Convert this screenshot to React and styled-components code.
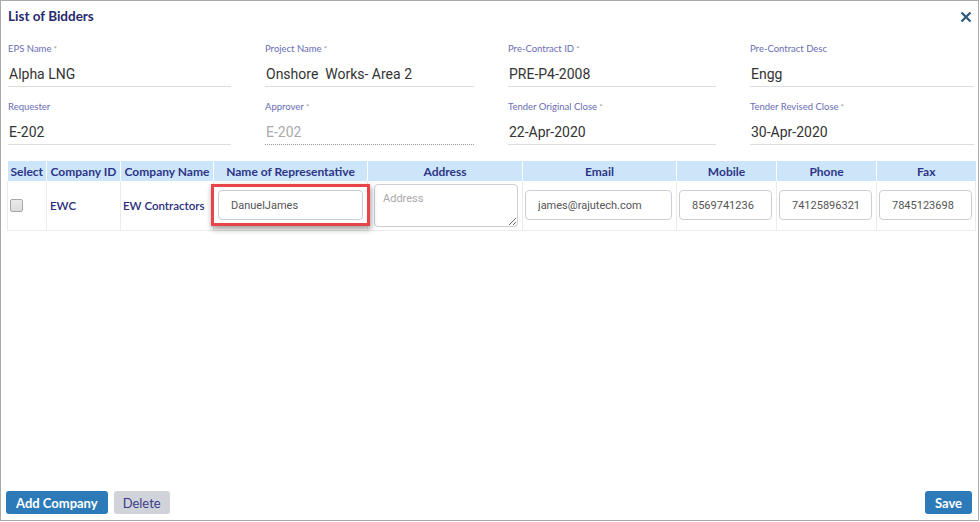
import React from 'react';
import styled, { createGlobalStyle } from 'styled-components';

const GlobalStyle = createGlobalStyle`
  html, body { margin: 0; padding: 0; background: #fff; }
  * { box-sizing: border-box; }
`

const fields = [
  { label: 'EPS Name', req: true, value: 'Alpha LNG' },
  { label: 'Project Name', req: true, value: 'Onshore  Works- Area 2' },
  { label: 'Pre-Contract ID', req: true, value: 'PRE-P4-2008' },
  { label: 'Pre-Contract Desc', value: 'Engg' },
  { label: 'Requester', value: 'E-202' },
  { label: 'Approver', req: true, value: 'E-202', disabled: true },
  { label: 'Tender Original Close', req: true, value: '22-Apr-2020' },
  { label: 'Tender Revised Close', req: true, value: '30-Apr-2020' },
];

const columns = [
  { title: 'Select', width: 39 },
  { title: 'Company ID', width: 74 },
  { title: 'Company Name', width: 93 },
  { title: 'Name of Representative', width: 154 },
  { title: 'Address', width: 155 },
  { title: 'Email', width: 154 },
  { title: 'Mobile', width: 100 },
  { title: 'Phone', width: 100 },
  { title: 'Fax', width: 99 },
];

const App = () => {
  return (
    <>
      <GlobalStyle />
      <Modal>
        <Header>
          <Title>List of Bidders</Title>
          <Close aria-label="close">
            <svg width="12" height="12" viewBox="0 0 12 12">
              <path d="M1.5 1.5 L10.5 10.5 M10.5 1.5 L1.5 10.5" stroke="#2f5b7c" strokeWidth="2.3" strokeLinecap="butt" />
            </svg>
          </Close>
        </Header>

        <Form>
          {fields.map((f) => (
            <Field key={f.label}>
              <Label>
                {f.label}
                {f.req && <Star> *</Star>}
              </Label>
              <Value disabled={f.disabled}>{f.value}</Value>
            </Field>
          ))}
        </Form>

        <Table>
          <colgroup>
            {columns.map((c) => (
              <col key={c.title} style={{ width: c.width }} />
            ))}
          </colgroup>
          <thead>
            <tr>
              {columns.map((c) => (
                <Th key={c.title}>{c.title}</Th>
              ))}
            </tr>
          </thead>
          <tbody>
            <tr>
              <Td $pad="0 0 0 2px">
                <Check />
              </Td>
              <Td $pad="0 0 0 3px">EWC</Td>
              <Td $pad="0 0 0 2px">EW Contractors</Td>
              <Td $pad="0 4px">
                <Highlight>
                  <Input defaultValue="DanuelJames" />
                </Highlight>
              </Td>
              <Td $pad="0 4px 0 6px">
                <Area placeholder="Address" />
              </Td>
              <Td $pad="0 4px 0 2px">
                <Input defaultValue="james@rajutech.com" />
              </Td>
              <Td $pad="0 4px 0 2px">
                <Input defaultValue="8569741236" />
              </Td>
              <Td $pad="0 4px 0 2px">
                <Input defaultValue="74125896321" />
              </Td>
              <Td $pad="0 3px 0 2px">
                <Input defaultValue="7845123698" />
              </Td>
            </tr>
          </tbody>
        </Table>

        <Footer>
          <Actions>
            <Button>Add Company</Button>
            <Button $variant="muted">Delete</Button>
          </Actions>
          <Button>Save</Button>
        </Footer>
      </Modal>
    </>
  );
}

const Modal = styled.div`
  width: 979px;
  height: 521px;
  border: 1px solid #a9a9a9;
  display: flex;
  flex-direction: column;
  font-family: Lato, "Liberation Sans", sans-serif;
  background: #fff;
`

const Header = styled.div`
  display: flex;
  justify-content: space-between;
  align-items: center;
  padding: 4px 6px 0 7px;
  height: 26px;
`

const Title = styled.h2`
  margin: 0;
  font-size: 13.5px;
  font-weight: 700;
  color: #26296e;
`

const Close = styled.span`
  display: flex;
  margin-top: 2px;
`

const Form = styled.div`
  display: grid;
  grid-template-columns: 223px 209px 208px 224px;
  column-gap: 34px;
  row-gap: 14px;
  padding: 16px 0 0 7px;
`

const Field = styled.div`
  display: flex;
  flex-direction: column;
`

const Label = styled.label`
  height: 12px;
  line-height: 12px;
  font-size: 9.5px;
  color: #6a6db5;
  margin-bottom: 7px;
`

const Star = styled.span`
  color: #999;
  font-size: 8px;
  vertical-align: top;
`

const Value = styled.div`
  height: 25px;
  line-height: 24px;
  font-family: Roboto, "Liberation Sans", sans-serif;
  font-size: 14px;
  color: ${(p) => (p.disabled ? '#aaa' : '#333')};
  border-bottom: 1px ${(p) => (p.disabled ? 'dotted #999' : 'solid #ddd')};
  padding-left: 1px;
  white-space: pre;
`

const Table = styled.table`
  margin: 16px 0 0 6px;
  width: 968px;
  table-layout: fixed;
  border-collapse: collapse;
`

const Th = styled.th`
  height: 20px;
  padding: 0;
  background: #cce5f8;
  border-left: 1px solid #fff;
  font-size: 12px;
  font-weight: 700;
  color: #2e3588;
  text-align: center;
  white-space: nowrap;
  &:first-child { border-left: none; }
`

const Td = styled.td`
  height: 49px;
  padding: ${(p) => p.$pad};
  border: 1px solid #ebebeb;
  border-top: none;
  font-size: 11.5px;
  font-weight: 600;
  color: #2b2d7d;
  white-space: nowrap;
  vertical-align: middle;
`

const Check = styled.span`
  display: block;
  width: 13px;
  height: 13px;
  border: 1px solid #a8a8a8;
  border-radius: 2px;
  background: linear-gradient(#eaeaea, #dcdcdc);
`

const Highlight = styled.div`
  position: relative;
  &::after {
    content: '';
    position: absolute;
    left: -7px;
    right: -7px;
    top: -6px;
    bottom: -6px;
    border: 3px solid #e8454a;
    box-shadow: 1px 3px 6px rgba(0, 0, 0, 0.4);
    pointer-events: none;
  }
`

const Input = styled.input`
  display: block;
  width: 100%;
  height: 30px;
  border: 1px solid #ccced6;
  border-radius: 4px;
  padding: 0 0 0 12px;
  font-family: Roboto, "Liberation Sans", sans-serif;
  font-size: 11px;
  color: #555;
  outline: none;
  background: #fff;
`

const Area = styled.textarea`
  display: block;
  width: 100%;
  height: 43px;
  border: 1px solid #ccced6;
  border-radius: 4px;
  padding: 7px 8px;
  font-family: Roboto, "Liberation Sans", sans-serif;
  font-size: 11px;
  color: #555;
  outline: none;
  resize: both;
  &::placeholder { color: #aaa; }
`

const Footer = styled.div`
  margin-top: auto;
  display: flex;
  justify-content: space-between;
  align-items: center;
  padding: 0 6px 6px 5px;
`

const Actions = styled.div`
  display: flex;
  gap: 6px;
`

const Button = styled.button`
  height: 23px;
  padding: 0 ${(p) => (p.$variant === 'muted' ? '9px' : '10px')};
  border: none;
  border-radius: 3px;
  background: ${(p) => (p.$variant === 'muted' ? '#d0d3d9' : '#2d7ab8')};
  color: ${(p) => (p.$variant === 'muted' ? '#3a3a8a' : '#fff')};
  font-family: Lato, "Liberation Sans", sans-serif;
  font-size: 13px;
  font-weight: ${(p) => (p.$variant === 'muted' ? 400 : 700)};
`

export default App;
